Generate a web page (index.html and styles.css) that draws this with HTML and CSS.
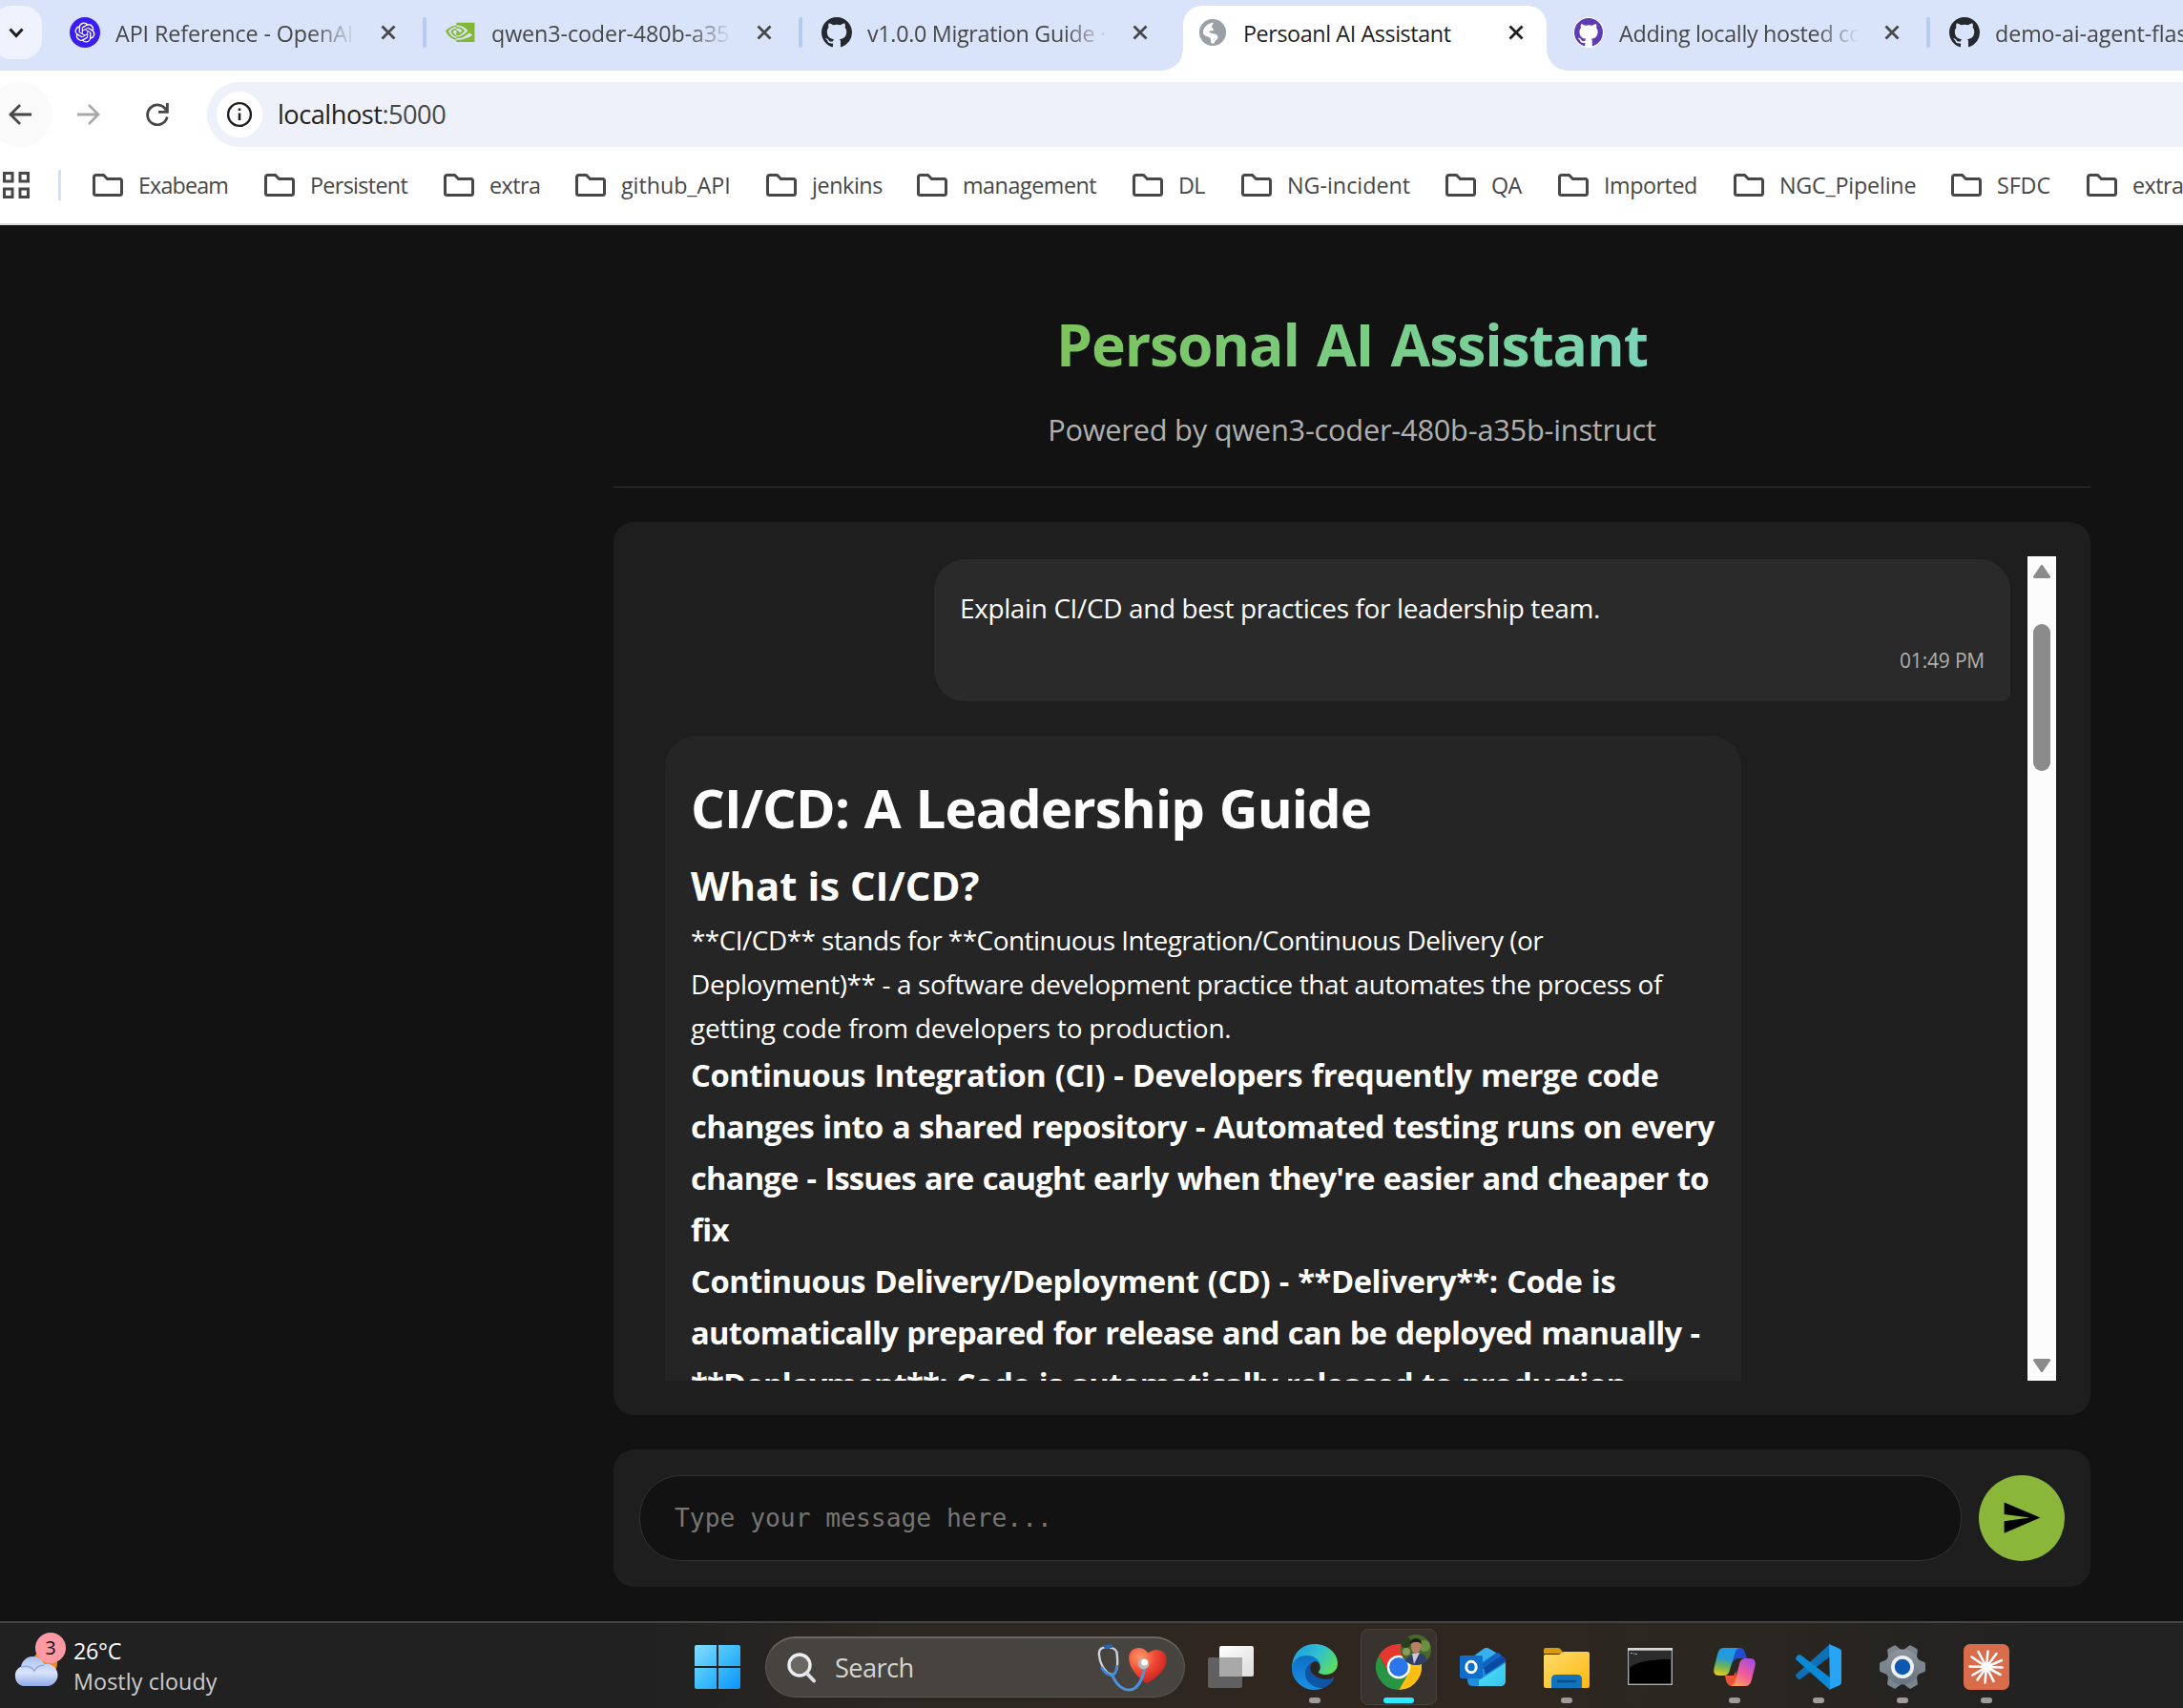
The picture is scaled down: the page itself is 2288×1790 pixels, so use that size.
FILE: index.html
```
<!DOCTYPE html>
<html lang="en">
<head>
<meta charset="utf-8">
<title>Persoanl AI Assistant</title>
<link rel="stylesheet" href="styles.css">
</head>
<body>
<svg class="defs" width="0" height="0" aria-hidden="true">
  <symbol id="close" viewBox="0 0 16 16"><path d="M1.5 1.5l13 13M14.500 1.500l-13 13" fill="none" stroke="currentColor" stroke-width="2.8"/></symbol>
  <symbol id="folder" viewBox="0 0 32 24"><path d="M1.500 4V20.500a2 2 0 0 0 2 2h25a2 2 0 0 0 2-2V7.500a2 2 0 0 0-2-2H15.500L11.500 1.500H3.500a2 2 0 0 0-2 2z" fill="none" stroke="currentColor" stroke-width="3"/></symbol>
  <symbol id="github" viewBox="0 0 16 16"><path fill="currentColor" d="M8 0C3.58 0 0 3.58 0 8c0 3.54 2.29 6.53 5.47 7.59.4.07.55-.17.55-.38 0-.19-.01-.82-.01-1.49-2.01.37-2.53-.49-2.69-.94-.09-.23-.48-.94-.82-1.13-.28-.15-.68-.52-.01-.53.63-.01 1.08.58 1.23.82.72 1.21 1.87.87 2.33.66.07-.52.28-.87.51-1.07-1.78-.2-3.64-.89-3.64-3.95 0-.87.31-1.59.82-2.15-.08-.2-.36-1.02.08-2.12 0 0 .67-.21 2.2.82.64-.18 1.32-.27 2-.27s1.36.09 2 .27c1.53-1.04 2.2-.82 2.2-.82.44 1.1.16 1.92.08 2.12.51.56.82 1.27.82 2.15 0 3.07-1.87 3.75-3.65 3.95.29.25.54.73.54 1.48 0 1.07-.01 1.93-.01 2.2 0 .21.15.46.55.38A8.01 8.01 0 0 0 16 8c0-4.42-3.58-8-8-8z"/></symbol>
</svg>

<header class="browser">
  <div class="tabstrip">
    <button class="tab-search" aria-label="Search tabs"><svg width="16" height="11" viewBox="0 0 16 11"><path d="M1.500 1.500L8 8.500l6.500-7" fill="none" stroke="#1f1f1f" stroke-width="3"/></svg></button>
    <div class="tab tab-sep">
      <svg class="favicon" viewBox="0 0 32 32"><circle cx="16" cy="16" r="16" fill="#3a1df0"/><path transform="translate(5.500 5.500) scale(.875)" fill="#fff" d="M22.2819 9.8211a5.9847 5.9847 0 0 0-.5157-4.9108 6.0462 6.0462 0 0 0-6.5098-2.9A6.0651 6.0651 0 0 0 4.9807 4.1818a5.9847 5.9847 0 0 0-3.9977 2.9 6.0462 6.0462 0 0 0 .7427 7.0966 5.98 5.98 0 0 0 .511 4.9107 6.051 6.051 0 0 0 6.5146 2.9001A5.9847 5.9847 0 0 0 13.2599 24a6.0557 6.0557 0 0 0 5.7718-4.2058 5.9894 5.9894 0 0 0 3.9977-2.9001 6.0557 6.0557 0 0 0-.7475-7.0729zm-9.022 12.6081a4.4755 4.4755 0 0 1-2.8764-1.0408l.1419-.0804 4.7783-2.7582a.7948.7948 0 0 0 .3927-.6813v-6.7369l2.02 1.1686a.071.071 0 0 1 .038.052v5.5826a4.504 4.504 0 0 1-4.4945 4.4944zm-9.6607-4.1254a4.4708 4.4708 0 0 1-.5346-3.0137l.142.0852 4.783 2.7582a.7712.7712 0 0 0 .7806 0l5.8428-3.3685v2.3324a.0804.0804 0 0 1-.0332.0615L9.74 19.9502a4.4992 4.4992 0 0 1-6.1408-1.6464zM2.3408 7.8956a4.485 4.485 0 0 1 2.3655-1.9728V11.6a.7664.7664 0 0 0 .3879.6765l5.8144 3.3543-2.0201 1.1685a.0757.0757 0 0 1-.071 0l-4.8303-2.7865A4.504 4.504 0 0 1 2.3408 7.872zm16.5963 3.8558L13.1038 8.364 15.1192 7.2a.0757.0757 0 0 1 .071 0l4.8303 2.7913a4.4944 4.4944 0 0 1-.6765 8.1042v-5.6772a.79.79 0 0 0-.407-.667zm2.0107-3.0231l-.142-.0852-4.7735-2.7818a.7759.7759 0 0 0-.7854 0L9.409 9.2297V6.8974a.0662.0662 0 0 1 .0284-.0615l4.8303-2.7866a4.4992 4.4992 0 0 1 6.6802 4.66zM8.3065 12.863l-2.02-1.1638a.0804.0804 0 0 1-.038-.0567V6.0742a4.4992 4.4992 0 0 1 7.3757-3.4537l-.142.0805L8.704 5.459a.7948.7948 0 0 0-.3927.6813zm1.0976-2.3654l2.602-1.4998 2.6069 1.4998v2.9994l-2.5974 1.4997-2.6067-1.4997Z"/></svg>
      <span class="tab-title ls-a">API Reference - OpenAI</span>
      <svg class="close"><use href="#close"/></svg>
    </div>
    <div class="tab tab-sep">
      <svg class="favicon" viewBox="0 0 32 32"><path transform="translate(0 .7) scale(1.27)" fill="#85b737" d="M8.948 8.798v-1.43a6.7 6.7 0 0 1 .424-.018c3.922-.124 6.493 3.374 6.493 3.374s-2.774 3.851-5.75 3.851c-.398 0-.787-.062-1.158-.185v-4.346c1.528.185 1.837.857 2.747 2.385l2.04-1.714s-1.492-1.952-4-1.952a6.016 6.016 0 0 0-.796.035m0-4.735v2.138l.424-.027c5.45-.185 9.01 4.47 9.01 4.47s-4.08 4.964-8.33 4.964c-.37 0-.733-.035-1.095-.097v1.325c.3.035.61.062.91.062 3.957 0 6.82-2.023 9.593-4.408.459.371 2.34 1.263 2.73 1.652-2.633 2.208-8.772 3.984-12.253 3.984-.335 0-.653-.018-.971-.053v1.864H24V4.063zm0 10.326v1.131c-3.657-.654-4.673-4.46-4.673-4.46s1.758-1.944 4.673-2.262v1.237H8.94c-1.528-.186-2.73 1.245-2.73 1.245s.68 2.412 2.739 3.11M2.456 10.9s2.164-3.197 6.5-3.533V6.201C4.153 6.59 0 10.653 0 10.653s2.35 6.802 8.948 7.42v-1.237c-4.84-.6-6.492-5.936-6.492-5.936z"/></svg>
      <span class="tab-title ls-a">qwen3-coder-480b-a35</span>
      <svg class="close"><use href="#close"/></svg>
    </div>
    <div class="tab">
      <svg class="favicon dark"><use href="#github"/></svg>
      <span class="tab-title ls-b">v1.0.0 Migration Guide ·</span>
      <svg class="close"><use href="#close"/></svg>
    </div>
    <div class="tab tab-active">
      <svg class="favicon" viewBox="0 0 32 32"><circle cx="16" cy="16" r="14" fill="#9aa0a6"/><path d="M6 14.500C7 10 11 6.500 16.500 5.500c1 1.500-1.500 2.500-1.500 4.500 0 1.500 2 1.500 2 3.500-1.500 1.500-3.500 0-4.500 1.500-.5 1.500 2 2 4 2.200 2.500.3 5 1.300 5 3.800 0 2.500-3 3-3.500 5.500-.8 1.500-2.500 1.500-4 .5 0-2 .5-4-1-5.500-2-1.500-6-1.500-7-4.500z" fill="#fff"/></svg>
      <span class="tab-title">Persoanl AI Assistant</span>
      <svg class="close"><use href="#close"/></svg>
    </div>
    <div class="tab tab-sep">
      <svg class="favicon purple" viewBox="0 0 32 32"><circle cx="16" cy="16" r="16" fill="#fff"/><use href="#github" x="1" y="1" width="30" height="30"/></svg>
      <span class="tab-title ls-b">Adding locally hosted co</span>
      <svg class="close"><use href="#close"/></svg>
    </div>
    <div class="tab">
      <svg class="favicon dark"><use href="#github"/></svg>
      <span class="tab-title ls-a">demo-ai-agent-flas</span>
    </div>
  </div>

  <div class="toolbar">
    <button class="nav nav-back" aria-label="Back"><svg width="24" height="22" viewBox="0 0 24 22"><path d="M24 11H2M12 1L2 11l10 10" fill="none" stroke="#474747" stroke-width="2.800"/></svg></button>
    <button class="nav" aria-label="Forward"><svg width="24" height="22" viewBox="0 0 24 22"><path d="M0 11h22M12 1l10 10-10 10" fill="none" stroke="#a9a9a9" stroke-width="2.800"/></svg></button>
    <button class="nav" aria-label="Reload"><svg width="24" height="24" viewBox="0 0 24 24"><path d="M21.200 7.500A10.400 10.400 0 1 0 22.200 14.500" fill="none" stroke="#474747" stroke-width="2.800"/><path d="M22.400 0v9.400H13" fill="none" stroke="#474747" stroke-width="2.800"/></svg></button>
    <div class="omnibox">
      <span class="site-info"><svg width="28" height="28" viewBox="0 0 28 28"><circle cx="14" cy="14" r="11.900" fill="none" stroke="#1f1f1f" stroke-width="2.400"/><path d="M14 12.500v7.500M14 7.500v2.600" stroke="#1f1f1f" stroke-width="2.600"/></svg></span>
      <span class="url"><span class="host">localhost</span>:5000</span>
    </div>
  </div>

  <nav class="bookmarks">
    <svg class="apps" width="28" height="28" viewBox="0 0 28 28"><path d="M1.500 1.500h8.500v8.500H1.500zM18 1.500h8.500v8.500H18zM1.500 18h8.500v8.500H1.500zM18 18h8.500v8.500H18z" fill="none" stroke="#474747" stroke-width="3"/></svg>
    <span class="bm-sep"></span>
    <a class="bm w1"><svg><use href="#folder"/></svg>Exabeam</a>
    <a class="bm w2"><svg><use href="#folder"/></svg>Persistent</a>
    <a class="bm w3"><svg><use href="#folder"/></svg>extra</a>
    <a class="bm w4"><svg><use href="#folder"/></svg>github_API</a>
    <a class="bm w5"><svg><use href="#folder"/></svg>jenkins</a>
    <a class="bm w6"><svg><use href="#folder"/></svg>management</a>
    <a class="bm w7"><svg><use href="#folder"/></svg>DL</a>
    <a class="bm w8"><svg><use href="#folder"/></svg>NG-incident</a>
    <a class="bm w9"><svg><use href="#folder"/></svg>QA</a>
    <a class="bm w10"><svg><use href="#folder"/></svg>Imported</a>
    <a class="bm w11"><svg><use href="#folder"/></svg>NGC_Pipeline</a>
    <a class="bm w12"><svg><use href="#folder"/></svg>SFDC</a>
    <a class="bm"><svg><use href="#folder"/></svg>extra</a>
  </nav>
</header>

<main class="page">
  <div class="container">
    <header class="hero">
      <h1 class="hero-title"><span>Personal AI Assistant</span></h1>
      <p class="hero-sub">Powered by qwen3-coder-480b-a35b-instruct</p>
    </header>
    <section class="chat">
      <div class="messages">
        <article class="msg msg-user">
          <p class="msg-text">Explain CI/CD and best practices for leadership team.</p>
          <time class="msg-time">01:49 PM</time>
        </article>
        <article class="msg msg-bot">
          <h1>CI/CD: A Leadership Guide</h1>
          <h2>What is CI/CD?</h2>
          <p><span class="ln k5">**CI/CD** stands for **Continuous Integration/Continuous Delivery (or</span>
          <span class="ln k3">Deployment)** - a software development practice that automates the process of</span>
          <span class="ln k1">getting code from developers to production.</span></p>
          <h3><span class="ln k4">Continuous Integration (CI) - Developers frequently merge code</span>
          <span class="ln k6">changes into a shared repository - Automated testing runs on every</span>
          <span class="ln k8">change - Issues are caught early when they're easier and cheaper to</span>
          <span class="ln k4">fix</span></h3>
          <h3><span class="ln k4">Continuous Delivery/Deployment (CD) - **Delivery**: Code is</span>
          <span class="ln k7">automatically prepared for release and can be deployed manually -</span>
          <span class="ln k8">**Deployment**: Code is automatically released to production</span></h3>
        </article>
      </div>
      <div class="scrollbar">
        <svg width="18" height="14" viewBox="0 0 18 14"><path d="M9 1.500L16.500 12.500h-15z" fill="#8b8b8b" stroke="#8b8b8b" stroke-width="3" stroke-linejoin="round"/></svg>
        <span class="thumb"></span>
        <svg class="down" width="18" height="14" viewBox="0 0 18 14"><path d="M9 12.500L16.500 1.500h-15z" fill="#8b8b8b" stroke="#8b8b8b" stroke-width="3" stroke-linejoin="round"/></svg>
      </div>
    </section>
    <form class="composer">
      <div class="field">Type your message here...</div>
      <button class="send" type="button" aria-label="Send"><svg width="43.200" height="43.200" viewBox="0 0 24 24"><path d="M2.010 21L23 12 2.010 3 2 10l15 2-15 2z" fill="#000"/></svg></button>
    </form>
  </div>
</main>

<footer class="taskbar">
  <div class="weather">
    <div class="weather-icon">
      <svg width="50" height="60" viewBox="0 0 50 60"><defs><linearGradient id="cl" x1="0" y1="0" x2="0" y2="1"><stop offset="0" stop-color="#a9c0f0"/><stop offset=".55" stop-color="#d9e4fa"/><stop offset="1" stop-color="#8fa9e6"/></linearGradient></defs>
      <circle cx="33" cy="32" r="13" fill="#f08a1d"/><path d="M10 56a11 11 0 0 1-2-20.500C9 30 14 25 20 25c6 0 10 3 12.500 8A11.500 11.500 0 0 1 37 56z" fill="url(#cl)"/><path d="M8 36c6-2 12 0 14 4 1-3 5-6 10.500-6" fill="none" stroke="#8fa9e0" stroke-width="1.500"/></svg>
      <span class="badge">3</span>
    </div>
    <div class="weather-text"><span class="temp">26°C</span><span class="cond">Mostly cloudy</span></div>
  </div>

  <div class="start"><svg width="48" height="46" viewBox="0 0 48 46"><defs><linearGradient id="wn" gradientUnits="userSpaceOnUse" x1="0" y1="0" x2="48" y2="46"><stop offset="0" stop-color="#86dcff"/><stop offset=".5" stop-color="#3dbdfb"/><stop offset="1" stop-color="#0a93fb"/></linearGradient></defs><path fill="url(#wn)" d="M2 0H23V22H0V2a2 2 0 0 1 2-2zM25 0H46a2 2 0 0 1 2 2V22H25zM0 24H23V46H2a2 2 0 0 1-2-2zM25 24H48V44a2 2 0 0 1-2 2H25z"/></svg></div>

  <div class="search">
    <svg width="31" height="32" viewBox="0 0 31 32"><circle cx="13" cy="13" r="11" fill="#6b6864" stroke="#eceef2" stroke-width="3.400"/><path d="M20.500 21.500l7.500 8" stroke="#dfe1e6" stroke-width="4" stroke-linecap="round"/></svg>
    <span class="search-label">Search</span>
    <svg class="steth" width="76" height="50" viewBox="0 0 78 52"><defs><radialGradient id="ht" cx=".3" cy=".25" r=".8"><stop offset="0" stop-color="#ff9a6a"/><stop offset=".5" stop-color="#f04a33"/><stop offset="1" stop-color="#c81e22"/></radialGradient></defs>
    <path d="M53 43C44 36 34 27 34 15c0-11 14-15 21-5 7-7 20-4 20 6 0 12-10 20-22 27z" fill="url(#ht)"/>
    <path d="M11 4C5 3 1 5 1.500 12c.5 8 6 20 14 21.500C22 32 22 20 21 11c0-4-3-7-8-7" fill="none" stroke="#c9d3df" stroke-width="2.500"/><path d="M4 25c3 6 8 9 11.500 9 3-.5 5-4 5.500-11" fill="none" stroke="#3f87d6" stroke-width="3"/><path d="M7 3.500l9-1.500" stroke="#2566b8" stroke-width="4"/>
    <path d="M15.500 33C20 44 27 50 35 50c9-1 15-13 16-26" fill="none" stroke="#4b93df" stroke-width="3.200" stroke-linecap="round"/><circle cx="50" cy="21.500" r="6" fill="#b4b8bc"/><circle cx="51" cy="20" r="3.500" fill="#fff"/></svg>
  </div>

  <div class="apps-row">
    <div class="app"><svg width="48" height="48" viewBox="0 0 48 48"><defs><linearGradient id="tv" x1="0" y1="0" x2="1" y2="1"><stop offset="0" stop-color="#fff"/><stop offset="1" stop-color="#dcdcdc"/></linearGradient></defs><rect y="14" width="36" height="32" rx="2" fill="#606060"/><rect x="12" y="2" width="36" height="32" rx="2" fill="url(#tv)"/><path d="M12 14h24v20H12z" fill="#a9a9a9"/></svg></div>
    <div class="app open"><svg width="48" height="48" viewBox="0 0 48 48"><defs><linearGradient id="e1" x1="0" y1=".2" x2="1" y2=".7"><stop offset="0" stop-color="#1f9de0"/><stop offset=".5" stop-color="#2fc0d0"/><stop offset="1" stop-color="#5fe05a"/></linearGradient><linearGradient id="e2" x1="0" y1="0" x2="0" y2="1"><stop offset="0" stop-color="#0f6fc4"/><stop offset="1" stop-color="#1a92e4"/></linearGradient></defs>
      <path d="M0 26C0 10 10 0 24 0s24 10 24 20c0 8-6 12-13 12-5 0-8-1.500-7-3 2-2 2-5 1-7-2-4-7-6-13-6C8 15 2 20 0 26z" fill="url(#e1)"/>
      <path d="M0 25c1-9 8-13 15-13s13 3 15 10c-2-4-5-4-8-3-5 2-6 8-4 13 3 8 10 14 15 14-9 4-21 2-28-7-4-5-5-9-5-14z" fill="url(#e2)"/>
      <path d="M22 19c-5 2-8 6-8 12 0 8 8 16 19 15 5-2 9-5 11-10 .5-1.500-.3-1.200-1-.8C35 39 25 36 20 29c-1.500-3-.5-7 2-10z" fill="#0f55a5"/><path d="M22 19c4-2 8 1 7.500 5-.5 3-3 4-1.500 6 1 1.500 4 2 7 2-3 2-9 1-12-2-3-3-4-8-1-11z" fill="#2a251f"/></svg></div>
    <div class="app active"><svg width="48" height="48" viewBox="0 0 48 48"><path d="M3.200 12A24 24 0 0 1 44.800 12H24A12 12 0 0 0 13.600 30z" fill="#e5392f"/><path d="M44.800 12A24 24 0 0 1 24 48L34.400 30A12 12 0 0 0 24 12z" fill="#fdc010"/><path d="M3.200 12A24 24 0 0 0 24 48L34.400 30A12 12 0 0 1 13.600 30z" fill="#289544"/><circle cx="24" cy="24" r="12.300" fill="#fff"/><circle cx="24" cy="24" r="9.900" fill="#2a76ea"/></svg>
      <svg class="avatar" width="32" height="32" viewBox="0 0 32 32"><defs><clipPath id="av"><circle cx="16" cy="16" r="16"/></clipPath></defs><g clip-path="url(#av)"><path d="M0 0h32v32H0z" fill="#47682b"/><circle cx="25" cy="12" r="6" fill="#6d9140"/><circle cx="5" cy="8" r="6" fill="#2c3d1c"/><circle cx="6" cy="18" r="4" fill="#8a9a5a"/><path d="M4 32c1-8 5-10 10-11l8-1c5 2 6 7 6 12z" fill="#2f3f6b"/><path d="M12 20l8-1-6 12z" fill="#cfc6dd"/><ellipse cx="16" cy="12.500" rx="5" ry="7" fill="#b98067"/><path d="M10 10c0-8 12-8 12 0-3-3-8-3-12 0z" fill="#1d1a16"/></g></svg></div>
    <div class="app"><svg width="48" height="48" viewBox="0 0 48 48"><defs><linearGradient id="o1" x1="0" y1="0" x2="1" y2="1"><stop offset="0" stop-color="#4fe0f5"/><stop offset="1" stop-color="#37c4ee"/></linearGradient></defs><path d="M8 17L25 5q3-2 6 0L46 14q2 2 2 4v20q0 6-6 6H14q-6 0-6-6z" fill="#1f8fdc"/><path d="M12 15L25 5q3-2 6 0l7 4-22 15z" fill="#35b1ee"/><path d="M20 44V38L48 20v18q0 6-6 6z" fill="url(#o1)"/><path d="M24 20L40 9l7 5.500q1.500 1.500.5 4L27 32z" fill="#0a4aa5"/><path d="M24 20L40 9l4 3-20 14z" fill="#1164c4"/><rect y="12" width="24" height="24" rx="2" fill="#0f6dcc"/><ellipse cx="12" cy="24" rx="5.200" ry="5.800" fill="none" stroke="#fff" stroke-width="3"/></svg></div>
    <div class="app open"><svg width="48" height="48" viewBox="0 0 48 48"><defs><linearGradient id="f1" x1="0" y1="0" x2="1" y2="1"><stop offset="0" stop-color="#ffdc6b"/><stop offset="1" stop-color="#fcb811"/></linearGradient></defs><path d="M0 6q0-2 2-2h13q2 0 4 3l2 3H0z" fill="#d9990c"/><path d="M0 12q0-1 2-1h14l5-3h25q2 0 2 2v34q0 2-2 2H2q-2 0-2-2z" fill="url(#f1)"/><path d="M8 46V37q0-5 5-5h22q5 0 5 5v9z" fill="#1273bd"/><path d="M15 39h18" stroke="#0b4f8c" stroke-width="2.500" stroke-linecap="round"/></svg></div>
    <div class="app"><svg width="48" height="48" viewBox="0 0 48 48"><rect x=".7" y="4.700" width="45.600" height="37.600" fill="#000" stroke="#a9adb2" stroke-width="1.400"/><path d="M1.500 25C10 18 24 16 45.500 16V7h-44z" fill="#2c2c2c"/><path d="M0 4h47v2.800H0z" fill="#d5d8db"/><path d="M3 9.500h2M6 10h1.500M8 10.500h2" stroke="#aaa" stroke-width="1.200"/></svg></div>
    <div class="app open"><svg width="48" height="48" viewBox="0 0 48 48"><defs><linearGradient id="c1" x1=".3" y1="0" x2=".1" y2="1"><stop offset="0" stop-color="#1b9bea"/><stop offset=".35" stop-color="#2a9bd0"/><stop offset=".65" stop-color="#6fb64f"/><stop offset="1" stop-color="#f5cc18"/></linearGradient><linearGradient id="c2" x1=".8" y1="0" x2=".2" y2="1"><stop offset="0" stop-color="#a54be0"/><stop offset=".5" stop-color="#ee5a9c"/><stop offset="1" stop-color="#ffa35a"/></linearGradient></defs><path d="M20 4h9c4 0 5 2 6 5l2 6h-8c-4 0-6 2-7 5z" fill="#1f4fd0"/><path d="M14 33h9l3-5c-1 8 0 16-4 16-6 0-7-5-8-11z" fill="#ee5433"/><path d="M12 4h18c-4 0-5 3-6 7l-5 16c-1 4-3 6-7 6H8c-5 0-7-3-5-10L6 11c1-4 3-7 6-7z" fill="url(#c1)"/><path d="M36 44H19c4 0 5-3 6-7l4-16c1-4 3-6 7-6h4c5 0 7 3 5 10l-3 12c-1 4-3 7-6 7z" fill="url(#c2)"/></svg></div>
    <div class="app open"><svg width="48" height="48" viewBox="0 0 48 48"><path d="M36 0v13L5.500 36.500q-1.500 1-3 0L.7 34.500Q-.5 33 .7 31.500z" fill="#0b71b8"/><path d="M36 48V35L5.500 11.500q-1.500-1-3 0L.7 13.500Q-.5 15 .7 16.500z" fill="#0a8ad6"/><path d="M35 0l11.500 5Q48 6 48 8v32q0 2-1.500 3L35 48l1-1z" fill="#26a3f2"/></svg></div>
    <div class="app open"><svg width="48" height="48" viewBox="0 0 48 48"><defs><linearGradient id="g1" x1="0" y1="0" x2="0" y2="1"><stop offset="0" stop-color="#8e969d"/><stop offset="1" stop-color="#677480"/></linearGradient></defs><g fill="#7c868f"><path d="M1 19l7-3h32l7 3q1 0 1 2v6q0 2-1 2l-7 3H8l-7-3q-1 0-1-2v-6q0-2 1-2z"/><path transform="rotate(60 24 24)" d="M1 19l7-3h32l7 3q1 0 1 2v6q0 2-1 2l-7 3H8l-7-3q-1 0-1-2v-6q0-2 1-2z"/><path transform="rotate(120 24 24)" d="M1 19l7-3h32l7 3q1 0 1 2v6q0 2-1 2l-7 3H8l-7-3q-1 0-1-2v-6q0-2 1-2z"/></g><circle cx="24" cy="24" r="18.500" fill="url(#g1)"/><circle cx="24" cy="24" r="12" fill="#eef0f3"/><circle cx="24" cy="24" r="8.200" fill="#0b58ae"/></svg></div>
    <div class="app open"><svg width="48" height="48" viewBox="0 0 48 48"><rect width="48" height="48" rx="6.500" fill="#d96c4b"/><path d="M24 24L15.500 8M24 24L25.500 7.500M24 24L34.500 10M24 24L40 17M24 24L40.500 24.500M24 24L38.500 32M24 24L31.500 39M24 24L22.500 40.500M24 24L14.500 37.500M24 24L9.500 32.500M24 24L6.500 23.500M24 24L8.500 13.500" stroke="#fff" stroke-width="2.600" stroke-linecap="round"/><circle cx="24" cy="24" r="4.500" fill="#fff"/></svg></div>
  </div>
</footer>
</body>
</html>
```
FILE: styles.css
```
* { box-sizing: border-box; }

body {
  margin: 0;
  width: 2288px;
  height: 1790px;
  overflow: hidden;
  display: flex;
  flex-direction: column;
  background: #121212;
  font-family: "Open Sans", "Noto Sans", sans-serif;
}

h1, h2, h3, p { margin: 0; }
svg { display: block; flex: none; }
.defs { position: absolute; }
button { border: 0; padding: 0; background: none; }

/* Browser window */
.browser {
  flex: none;
  height: 236px;
  background: #fff;
  border-bottom: 2px solid #dcdcdc;
  color: #474747;
  font-size: 23.3px;
  overflow: hidden;
}

.tabstrip {
  display: flex;
  height: 74px;
  background: #d9e3fa;
}

.tab-search {
  flex: none;
  width: 52px;
  height: 56px;
  margin: 6px 7px 0 -8px;
  padding-left: 8px;
  display: flex;
  align-items: center;
  justify-content: center;
  border-radius: 20px;
  background: #eff3fd;
}

.tab-search svg { margin-right: 10px; }

.tab {
  position: relative;
  flex: none;
  display: flex;
  align-items: center;
  width: 394px;
  height: 68px;
  padding-left: 22px;
}

.tab-sep::after {
  content: "";
  position: absolute;
  right: -2px;
  top: 18px;
  width: 4px;
  height: 32px;
  border-radius: 2px;
  background: #b8c9f4;
}

.favicon { width: 32px; height: 32px; }
.dark { color: #24292f; }
.purple { color: #5e3db3; }

.tab-title {
  width: 254px;
  margin-left: 16px;
  height: 40px;
  line-height: 42px;
  white-space: nowrap;
  letter-spacing: -0.4px;
  -webkit-mask-image: linear-gradient(90deg, #000 205px, transparent 252px);
  mask-image: linear-gradient(90deg, #000 205px, transparent 252px);
}

.ls-a { letter-spacing: -0.1px; }
.ls-b { letter-spacing: -0.3px; }
.close { width: 16px; height: 16px; margin-left: 24px; }

.tab-active { color: #1f1f1f; }

.tab-active .tab-title {
  -webkit-mask-image: none;
  mask-image: none;
}

.tab-active > * { position: relative; }

/* Active tab surface, with the two outward curves at its foot */
.tab-active::before {
  content: "";
  position: absolute;
  left: 7px;
  right: 6px;
  top: 6px;
  height: 68px;
  border-radius: 20px 20px 0 0;
  background: #fff;
}

.tab-active::after {
  content: "";
  position: absolute;
  left: -15px;
  right: -16px;
  top: 52px;
  height: 22px;
  background:
    radial-gradient(circle at 0 0, transparent 21.5px, #fff 22px) left / 22px 22px no-repeat,
    radial-gradient(circle at 100% 0, transparent 21.5px, #fff 22px) right / 22px 22px no-repeat;
}

.toolbar {
  display: flex;
  align-items: center;
  height: 92px;
  background: #fff;
}

.nav {
  flex: none;
  width: 68px;
  height: 68px;
  margin-right: 4px;
  display: flex;
  align-items: center;
  justify-content: center;
}

.nav-back {
  margin-left: -13px;
  border-radius: 50%;
  background: #fafafa;
}

.omnibox {
  flex: 1;
  height: 68px;
  margin: 0 -60px 0 14px;
  padding-left: 10px;
  display: flex;
  align-items: center;
  border-radius: 34px;
  background: #eef1f9;
}

.site-info {
  width: 48px;
  height: 48px;
  display: flex;
  align-items: center;
  justify-content: center;
  border-radius: 50%;
  background: #fff;
}

.url {
  margin-left: 16px;
  font-size: 27.2px;
  line-height: 40px;
  letter-spacing: -0.5px;
}

.host { color: #1f1f1f; }

.bookmarks {
  display: flex;
  align-items: center;
  height: 68px;
  padding: 0 0 0 3px;
  margin-top: -6px;
  letter-spacing: -0.55px;
  white-space: nowrap;
}

.bm-sep {
  flex: none;
  width: 3px;
  height: 32px;
  margin: 0 33px 0 30px;
  background: #d3e0fb;
}

.bm {
  flex: none;
  display: flex;
  align-items: center;
  gap: 16px;
  line-height: 36px;
}

.bm svg { width: 32px; height: 24px; }
.w1 { width: 180px; letter-spacing: -0.85px; }
.w2 { width: 188px; letter-spacing: -0.66px; }
.w3 { width: 138px; }
.w4 { width: 200px; letter-spacing: -0.05px; }
.w5 { width: 158px; letter-spacing: -0.4px; }
.w6 { width: 226px; letter-spacing: -0.45px; }
.w7 { width: 114px; }
.w8 { width: 214px; letter-spacing: 0; }
.w9 { width: 118px; }
.w10 { width: 184px; letter-spacing: -0.45px; }
.w11 { width: 228px; letter-spacing: -0.2px; }
.w12 { width: 142px; letter-spacing: -0.1px; }

/* Assistant page */
.page {
  flex: 1;
  min-height: 0;
  padding-left: 643px;
}

.container { width: 1548px; }

.hero {
  padding: 85px 0 35px;
  border-bottom: 1px solid #333;
  text-align: center;
}

.hero-title {
  font-size: 60.6px;
  line-height: 80px;
  letter-spacing: -1.15px;
  word-spacing: 3.5px;
}

.hero-title span {
  background: linear-gradient(90deg, #7cc35b, #7acc87 55%, #7ad6ba);
  -webkit-background-clip: text;
  background-clip: text;
  color: transparent;
}

.hero-sub {
  margin-top: 24px;
  font-size: 30.75px;
  line-height: 50px;
  letter-spacing: -0.22px;
  color: #b0b0b0;
}

.chat {
  display: flex;
  height: 936px;
  margin-top: 36px;
  padding: 36px;
  border-radius: 21.6px;
  background: #1e1e1e;
}

.messages {
  flex: 1;
  height: 864px;
  padding: 3px 18px 0;
  display: flex;
  flex-direction: column;
  gap: 36px;
  overflow: hidden;
  color: #fff;
}

.msg {
  flex: none;
  width: 1128px;
  padding: 28.8px 27px;
  border-radius: 32.4px;
  font-size: 27.94px;
  line-height: 46.08px;
}

.msg-user {
  align-self: flex-end;
  height: 149px;
  padding-top: 28px;
  display: flex;
  flex-direction: column;
  border-bottom-right-radius: 9px;
  background: #2a2a2a;
}

.msg-text { letter-spacing: -0.36px; }

.msg-time {
  align-self: flex-end;
  margin-top: 15px;
  font-size: 20.95px;
  line-height: 34px;
  letter-spacing: -0.16px;
  color: #b0b0b0;
}

.msg-bot { background: #252525; }

.msg-bot h1 {
  font-size: 56.4px;
  line-height: 93px;
  letter-spacing: -0.93px;
  word-spacing: 2px;
}

.msg-bot h2 {
  font-size: 41.9px;
  line-height: 69.4px;
  letter-spacing: 0;
}

.msg-bot h3 {
  font-size: 32.7px;
  line-height: 53.9px;
  word-spacing: 1.4px;
}

.ln { display: block; white-space: nowrap; }
.k1 { letter-spacing: -0.19px; }
.k3 { letter-spacing: -0.38px; }
.k4 { letter-spacing: -0.45px; }
.k5 { letter-spacing: -0.52px; }
.k6 { letter-spacing: -0.64px; }
.k7 { letter-spacing: -0.74px; }
.k8 { letter-spacing: -0.8px; }

.scrollbar {
  width: 30px;
  padding: 9px 0;
  display: flex;
  flex-direction: column;
  align-items: center;
  background: #fcfcfc;
}

.thumb {
  width: 18px;
  height: 154px;
  margin-top: 48px;
  border-radius: 9px;
  background: #8b8b8b;
}

.down { margin-top: auto; }

.composer {
  display: flex;
  gap: 18px;
  height: 144px;
  margin-top: 36px;
  padding: 27px;
  border-radius: 21.6px;
  background: #1e1e1e;
}

.field {
  flex: 1;
  padding-left: 36px;
  border: 1px solid #333;
  border-radius: 43.2px;
  background: #121212;
  color: #757575;
  font-family: "DejaVu Sans Mono", "Liberation Mono", monospace;
  font-size: 26.3px;
  line-height: 88px;
}

.send {
  width: 90px;
  height: 90px;
  display: flex;
  align-items: center;
  justify-content: center;
  border-radius: 50%;
  background: #8ab639;
}

/* Desktop taskbar */
.taskbar {
  flex: none;
  display: flex;
  align-items: center;
  height: 91px;
  padding-top: 3px;
  border-top: 2px solid #444;
  background: linear-gradient(90deg, #212121 0, #212121 680px, #2c2721 960px, #30261f 1500px, #2a2621 1850px, #222 2130px, #222 100%);
  color: #fff;
}

.weather {
  display: flex;
  align-items: center;
  width: 728px;
  padding-left: 14px;
}

.weather-icon { position: relative; width: 63px; height: 72px; }

.badge {
  position: absolute;
  left: 23px;
  top: 0;
  width: 32px;
  height: 32px;
  border-radius: 50%;
  background: #ff9aa5;
  color: #111;
  font-size: 20px;
  line-height: 32px;
  text-align: center;
}

.weather-text {
  display: flex;
  flex-direction: column;
  margin-top: -2px;
  font-size: 23.3px;
  line-height: 32px;
}

.temp { letter-spacing: -0.31px; }
.cond { color: #ccc; letter-spacing: 0.1px; }
.start { width: 48px; }

.search {
  display: flex;
  align-items: center;
  width: 440px;
  height: 64px;
  margin-left: 26px;
  padding: 0 15px 0 22px;
  border: 1px solid #5c5853;
  border-top: 2px solid #6b6762;
  border-radius: 32px;
  background: #474440;
}

.search-label {
  margin-left: 19px;
  font-size: 27.2px;
  line-height: 40px;
  letter-spacing: -0.6px;
  color: #d6d4d1;
}

.steth { margin-left: auto; }

.apps-row {
  display: flex;
  margin-left: 4px;
}

.app {
  position: relative;
  width: 80px;
  height: 80px;
  margin: 0 4px;
  display: flex;
  align-items: center;
  justify-content: center;
  border-radius: 8px;
}

.open::after,
.active::after {
  content: "";
  position: absolute;
  left: 34px;
  bottom: 2px;
  width: 12px;
  height: 6px;
  border-radius: 3px;
  background: #a09c99;
}

.active {
  background: #38332e;
  border: 1px solid #48433e;
}

.active::after {
  left: 23px;
  bottom: 1px;
  width: 32px;
  background: #2ceaff;
}

.avatar {
  position: absolute;
  left: 41px;
  top: 5px;
}
```
